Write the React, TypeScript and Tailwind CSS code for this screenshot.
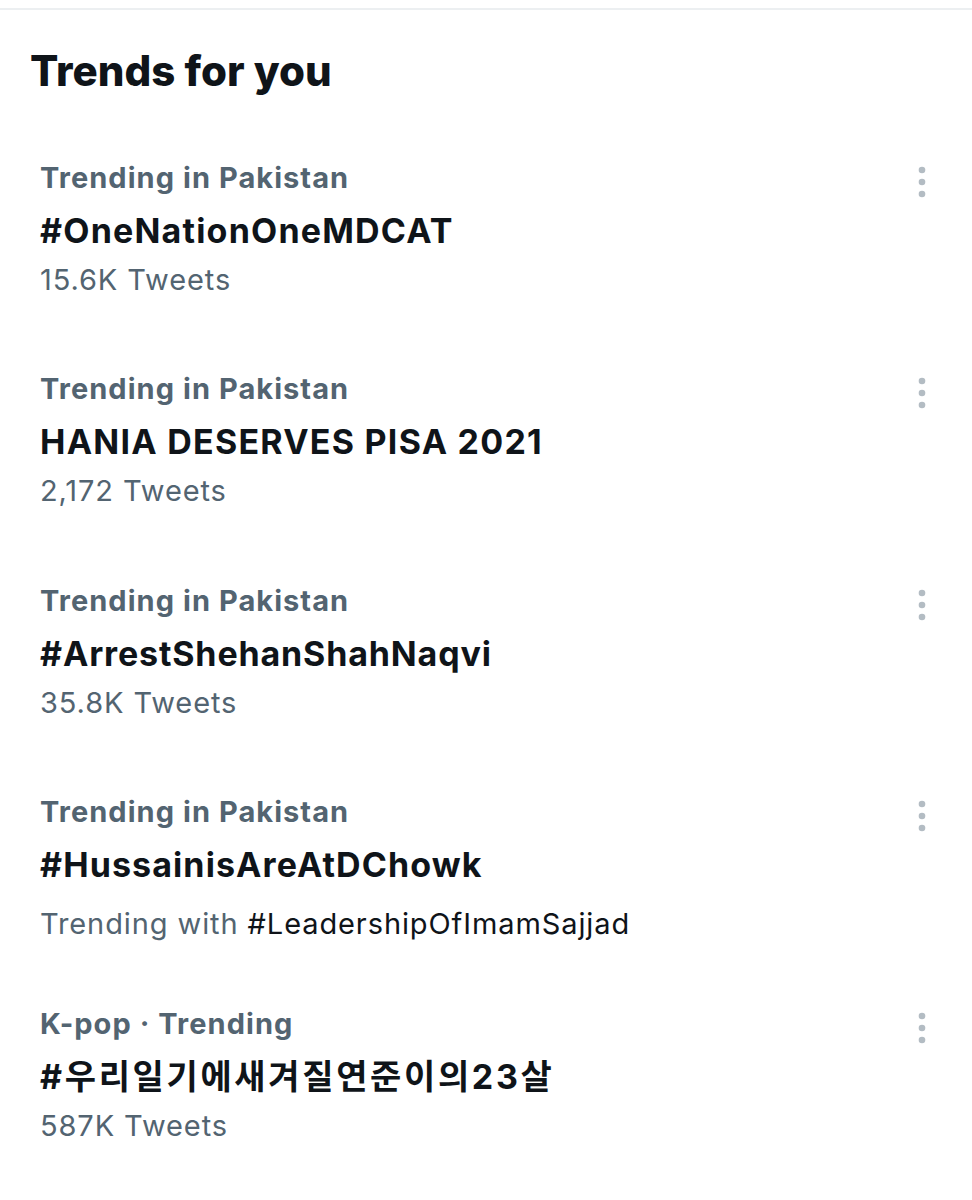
import React from "react";

type Trend = {
  context: string;
  title: string;
  titleTrack: string;
  meta: React.ReactNode;
  metaGap: string;
  after: string;
};

const trends: Trend[] = [
  {
    context: "Trending in Pakistan",
    title: "#OneNationOneMDCAT",
    titleTrack: "tracking-[1.2px]",
    meta: "15.6K Tweets",
    metaGap: "mt-0",
    after: "pb-[59px]",
  },
  {
    context: "Trending in Pakistan",
    title: "HANIA DESERVES PISA 2021",
    titleTrack: "tracking-[1.25px]",
    meta: "2,172 Tweets",
    metaGap: "mt-0",
    after: "pb-[60px]",
  },
  {
    context: "Trending in Pakistan",
    title: "#ArrestShehanShahNaqvi",
    titleTrack: "tracking-[0.85px]",
    meta: "35.8K Tweets",
    metaGap: "mt-0",
    after: "pb-[59px]",
  },
  {
    context: "Trending in Pakistan",
    title: "#HussainisAreAtDChowk",
    titleTrack: "tracking-[1.1px]",
    meta: (
      <>
        Trending with <span className="text-[#0f1419]">#LeadershipOfImamSajjad</span>
      </>
    ),
    metaGap: "mt-[10px]",
    after: "pb-[50px]",
  },
  {
    context: "K-pop · Trending",
    title: "#우리일기에새겨질연준이의23살",
    titleTrack: "tracking-[2.65px]",
    meta: "587K Tweets",
    metaGap: "mt-0",
    after: "pb-0",
  },
];

function MoreDots() {
  return (
    <svg width="10" height="32" viewBox="0 0 10 32" className="mt-[14px] shrink-0">
      <circle cx="5" cy="4" r="3.3" fill="#b3bcc3" />
      <circle cx="5" cy="16" r="3.3" fill="#b3bcc3" />
      <circle cx="5" cy="28" r="3.3" fill="#b3bcc3" />
    </svg>
  );
}

function TrendRow({ t }: { t: Trend }) {
  return (
    <div className={`flex justify-between pl-[40px] pr-[45px] ${t.after}`}>
      <div className="flex flex-col">
        <div className="h-[52px] flex items-center text-[29px] font-bold text-[#536471] tracking-[1.05px]">
          {t.context}
        </div>
        <div className={`h-[52px] flex items-center text-[34px] font-bold text-[#0f1419] ${t.titleTrack}`}>
          {t.title}
        </div>
        <div className={`h-[48px] flex items-center text-[29px] text-[#536471] tracking-[0.9px] ${t.metaGap}`}>
          <span>{t.meta}</span>
        </div>
      </div>
      <MoreDots />
    </div>
  );
}

export default function App() {
  return (
    <div
      className="w-[972px] h-[1200px] bg-white overflow-hidden"
      style={{ fontFamily: 'Inter, "Noto Sans CJK KR", sans-serif' }}
    >
      <div className="h-[8px]" />
      <div className="h-[2px] bg-[#eceff1]" />
      <div className="mt-[30px] h-[60px] pl-[30px] flex items-center text-[42px] font-extrabold text-[#0f1419] tracking-[0px]">
        Trends for you
      </div>
      <div className="mt-[52px] flex flex-col">
        {trends.map((t, i) => (
          <TrendRow key={i} t={t} />
        ))}
      </div>
    </div>
  );
}
